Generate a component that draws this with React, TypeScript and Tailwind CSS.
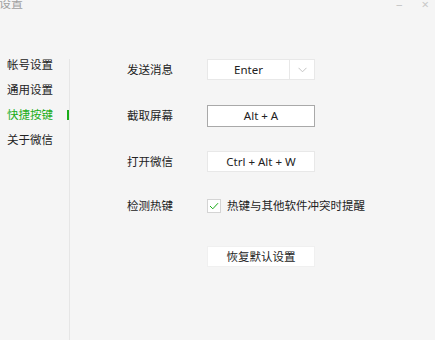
const NAV = ['帐号设置', '通用设置', '快捷按键', '关于微信']

export default function App() {
  const active = '快捷按键'

  return (
    <div
      className="w-[435px] h-[340px] bg-[#f5f5f5] overflow-hidden text-[11.5px] text-[#222]"
      style={{ fontFamily: '"Noto Sans", "Noto Sans CJK SC", sans-serif' }}
    >
      {/* title bar */}
      <div className="h-[50px] flex items-start justify-between">
        <span className="-mt-[5px] ml-[-1px] text-[12px] text-[#a0a0a0]">设置</span>
        <div className="flex items-start gap-[19px] mr-[6px] -mt-[5px] text-[#c8c8c8] text-[13px]">
          <span>–</span>
          <span>×</span>
        </div>
      </div>

      <div className="flex h-[290px]">
        {/* sidebar */}
        <div className="w-[69px] pt-[2px] flex flex-col">
          {NAV.map((item) => (
            <div key={item} className="h-[25px] flex items-center justify-between pl-[7px]">
              <span className={item === active ? 'text-[#1aad19]' : 'text-[#222]'}>{item}</span>
              {item === active && <span className="w-[2px] h-[10px] bg-[#1aad19]" />}
            </div>
          ))}
        </div>
        <div className="w-px mt-[9px] bg-[#e6e6e6]" />

        {/* content */}
        <div className="flex-1 pl-[57px] pt-[9px] flex flex-col">
          <div className="h-[21px] flex items-center">
            <span className="w-[80px]">发送消息</span>
            <div className="w-[108px] h-[21px] bg-white border border-[#e8e8e8] flex items-center">
              <span className="flex-1 text-center">Enter</span>
              <div className="w-[25px] h-full border-l border-[#e8e8e8] flex items-center justify-center">
                <svg width="9" height="6" viewBox="0 0 9 6" fill="none">
                  <path d="M0.5 0.8 L4.5 4.8 L8.5 0.8" stroke="#c4c4c4" strokeWidth="1" />
                </svg>
              </div>
            </div>
          </div>

          <div className="h-[22px] mt-[25px] flex items-center">
            <span className="w-[80px]">截取屏幕</span>
            <div className="w-[108px] h-[22px] bg-white border border-[#a9a9a9] flex items-center justify-center">
              Alt + A
            </div>
          </div>

          <div className="h-[21px] mt-[24px] flex items-center">
            <span className="w-[80px]">打开微信</span>
            <div className="w-[108px] h-[21px] bg-white border border-[#e8e8e8] flex items-center justify-center">
              Ctrl + Alt + W
            </div>
          </div>

          <div className="h-[21px] mt-[23px] flex items-center">
            <span className="w-[80px]">检测热键</span>
            <div className="w-[14px] h-[14px] bg-white border border-[#d4d4d4] flex items-center justify-center">
              <svg width="10" height="8" viewBox="0 0 10 8" fill="none">
                <path d="M1 4 L3.8 6.8 L9 1.2" stroke="#1aad19" strokeWidth="1" />
              </svg>
            </div>
            <span className="ml-[6px]">热键与其他软件冲突时提醒</span>
          </div>

          <div className="ml-[80px] mt-[30px] w-[108px] h-[21px] bg-white border border-[#f0f0f0] flex items-center justify-center">
            恢复默认设置
          </div>
        </div>
      </div>
    </div>
  )
}
